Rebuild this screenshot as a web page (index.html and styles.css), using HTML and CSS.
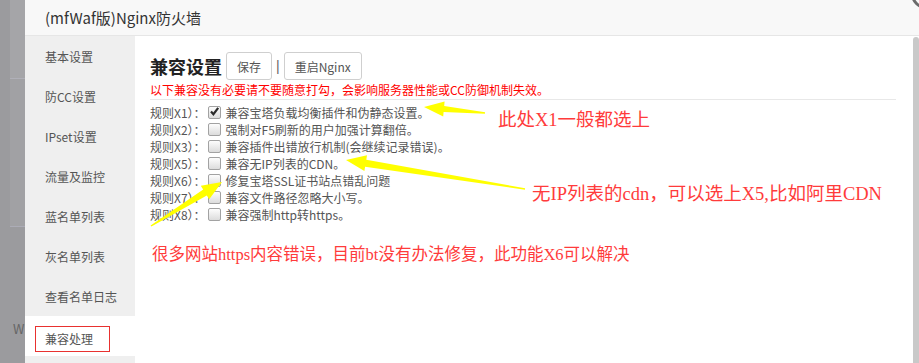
FILE: index.html
```html
<!DOCTYPE html>
<html lang="zh-CN">
  <head>
    <meta charset="UTF-8" />
    <meta name="viewport" content="width=device-width, initial-scale=1.0" />
    <title>(mfWaf版)Nginx防火墙</title>
    <link rel="stylesheet" href="styles.css">
  </head>
  <body>
    <div class="screen">
      <!-- page behind the dialog -->
      <div class="backdrop">
        <div class="backdrop-top"></div>
        <div class="backdrop-mid"></div>
        <div class="backdrop-low"><span class="backdrop-text">W</span></div>
      </div>

      <div class="dialog">
        <div class="dialog-head">
          (mfWaf版)Nginx防火墙
          <span class="close-btn"></span>
        </div>

        <div class="dialog-body">
          <ul class="side-menu">
            <li>基本设置</li>
            <li>防CC设置</li>
            <li>IPset设置</li>
            <li>流量及监控</li>
            <li>蓝名单列表</li>
            <li>灰名单列表</li>
            <li>查看名单日志</li>
            <li class="active"><span class="mark">兼容处理</span></li>
          </ul>

          <div class="main">
            <div class="title-row">
              <h2>兼容设置</h2>
              <button class="btn">保存</button>
              <span class="sep">|</span>
              <button class="btn">重启Nginx</button>
            </div>
            <p class="notice">以下兼容没有必要请不要随意打勾，会影响服务器性能或CC防御机制失效。</p>

            <div class="rules">
              <div class="rule">
                <span class="rule-name">规则X1）：</span>
                <span class="cb">
                  <svg width="13" height="13" viewBox="0 0 13 13"><path d="M3 6.5 L5.4 9.2 L10.2 2.8" fill="none" stroke="#2b2b2b" stroke-width="2.2" /></svg>
                </span>
                <span class="rule-text">兼容宝塔负载均衡插件和伪静态设置。</span>
              </div>
              <div class="rule">
                <span class="rule-name">规则X2）：</span>
                <span class="cb"></span>
                <span class="rule-text">强制对F5刷新的用户加强计算翻倍。</span>
              </div>
              <div class="rule">
                <span class="rule-name">规则X3）：</span>
                <span class="cb"></span>
                <span class="rule-text">兼容插件出错放行机制(会继续记录错误)。</span>
              </div>
              <div class="rule">
                <span class="rule-name">规则X5）：</span>
                <span class="cb"></span>
                <span class="rule-text">兼容无IP列表的CDN。</span>
              </div>
              <div class="rule">
                <span class="rule-name">规则X6）：</span>
                <span class="cb"></span>
                <span class="rule-text">修复宝塔SSL证书站点错乱问题</span>
              </div>
              <div class="rule">
                <span class="rule-name">规则X7）：</span>
                <span class="cb"></span>
                <span class="rule-text">兼容文件路径忽略大小写。</span>
              </div>
              <div class="rule">
                <span class="rule-name">规则X8）：</span>
                <span class="cb"></span>
                <span class="rule-text">兼容强制http转https。</span>
              </div>
            </div>

            <p class="note note-main">很多网站https内容错误，目前bt没有办法修复，此功能X6可以解决</p>
            <p class="note note-x1">此处X1一般都选上</p>
            <p class="note note-x5">无IP列表的cdn，可以选上X5,比如阿里CDN</p>
          </div>

          <div class="scrollbar"></div>
        </div>
      </div>
    </div>

    <!-- yellow arrows drawn over the screenshot -->
    <svg class="arrows" width="919" height="363" viewBox="0 0 919 363">
      <polygon points="485.1,112.3 444.2,106 444.6,101.5 424,107 443.2,116.5 443.6,112 484.9,113.7" />
      <polygon points="525.1,188.3 366.3,159.7 367,155.3 346,160 364.4,171.1 365.1,166.7 524.9,189.7" />
      <polygon points="150.6,225.4 203.2,189.5 200.8,185.7 222,182 209.2,199.3 206.8,195.5 151.4,226.6" />
    </svg>
  </body>
</html>
```

FILE: styles.css
```css
body {
  margin: 0;
  width: 919px;
  height: 363px;
  overflow: hidden;
  position: relative;
  font-family: "Noto Sans CJK SC", "Noto Sans", sans-serif;
  color: #555;
  background-color: #9e9ea1;
}
.screen {
  display: flex;
  height: 363px;
}
.backdrop {
  width: 25px;
  flex-shrink: 0;
  display: flex;
  flex-direction: column;
  background-color: #9b9b9e;
}
.backdrop-top {
  height: 78px;
  margin-left: 10px;
  background-color: #a5a5a8;
  border-bottom: 1px solid #b0b0b8;
}
.backdrop-mid {
  height: 147px;
  margin-left: 10px;
  background-color: #a1a1a4;
  border-bottom: 1px solid #acacb6;
}
.backdrop-low {
  flex: 1;
  padding: 88px 0 0 13px;
}
.backdrop-text {
  font-size: 13px;
  color: #666;
}
.dialog {
  flex: 1;
  display: flex;
  flex-direction: column;
  background-color: #ffffff;
  position: relative;
}
.dialog-head {
  height: 35px;
  line-height: 35px;
  padding-left: 20px;
  font-size: 15px;
  color: #333;
  background-color: #f8f8f8;
  border-bottom: 1px solid #e6e6e6;
}
.close-btn {
  position: absolute;
  right: -22px;
  top: -21px;
  width: 24px;
  height: 24px;
  border-radius: 50%;
  border: 3px solid #6b6b6b;
  background-color: #f8f8f8;
}
.dialog-body {
  flex: 1;
  display: flex;
}
.side-menu {
  width: 110px;
  margin: 0;
  padding: 0;
  list-style-type: none;
  background-color: #efefef;
}
.side-menu li {
  height: 40px;
  line-height: 41px;
  padding-left: 20px;
  font-size: 12px;
  color: #555;
}
.side-menu li.active {
  background-color: #ffffff;
  padding-left: 10px;
}
.mark {
  display: inline-block;
  width: 64px;
  height: 24px;
  line-height: 24px;
  padding-left: 9px;
  border: 1px solid #e8312f;
  vertical-align: middle;
}
.main {
  flex: 1;
  position: relative;
  padding: 16px 17px 0 15px;
}
.title-row {
  display: flex;
  align-items: center;
  height: 28px;
}
.title-row h2 {
  margin: 0 4px 0 0;
  font-size: 18px;
  font-weight: bold;
  color: #222;
}
.btn {
  height: 28px;
  padding: 0 10px;
  font-family: inherit;
  font-size: 12px;
  color: #555;
  background-color: #ffffff;
  border: 1px solid #cfcfcf;
  border-radius: 3px;
}
.sep {
  margin: 0 4px;
  font-family: "Liberation Sans", sans-serif;
  font-size: 14px;
  color: #666;
}
.notice {
  margin: 2px 0 0;
  line-height: 16px;
  font-size: 12px;
  color: #ff0000;
  border-bottom: 1px solid #e8e8e8;
  padding-bottom: 1px;
}
.rules {
  padding-top: 4px;
}
.rule {
  display: flex;
  align-items: center;
  height: 17px;
  font-size: 12px;
  color: #555;
}
.cb {
  width: 11px;
  height: 11px;
  margin: 0 5px 0 2px;
  border: 1px solid #a2a2a2;
  border-radius: 2px;
  background: linear-gradient(#fdfdfd, #dcdcdc);
  position: relative;
}
.cb svg {
  position: absolute;
  left: -1px;
  top: -2px;
}
.note {
  margin: 0;
  line-height: 20px;
  color: #ff3b3b;
  font-family: "Liberation Serif", "Noto Sans CJK SC", serif;
  white-space: nowrap;
}
.note-main {
  margin: 22px 0 0 2px;
  font-size: 16.5px;
}
.note-x1 {
  position: absolute;
  left: 363px;
  top: 74px;
  font-size: 18.5px;
}
.note-x5 {
  position: absolute;
  left: 397px;
  top: 148px;
  font-size: 18.5px;
}
.scrollbar {
  width: 6px;
  margin-top: 1px;
  background-color: #c9c9c9;
  border-radius: 3px 3px 0 0;
}
.arrows {
  position: absolute;
  left: 0;
  top: 0;
  pointer-events: none;
}
.arrows polygon {
  fill: #ffff00;
}
```
